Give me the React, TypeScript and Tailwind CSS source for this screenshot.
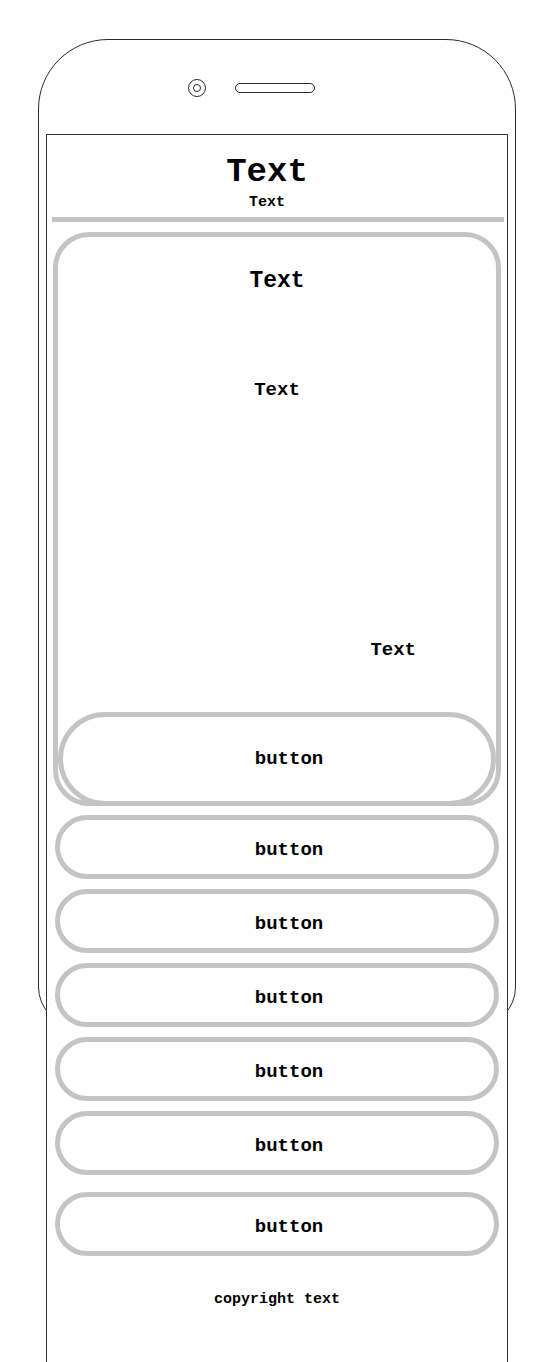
import React from 'react';

const mono = { fontFamily: '"Liberation Mono", "Courier New", monospace' };

function MenuButton({ label, className = '' }: { label: string; className?: string }) {
  return (
    <button
      className={`flex h-[64px] w-full items-center justify-center rounded-full border-[5px] border-[#c4c4c4] bg-white pl-[24px] pt-[5px] text-[19px] font-bold leading-[24px] text-black ${className}`}
    >
      {label}
    </button>
  );
}

export default function App() {
  const buttons = ['button', 'button', 'button', 'button', 'button'];

  return (
    <div className="relative flex h-[1362px] w-[552px] flex-col overflow-hidden bg-white pt-[134px]" style={mono}>
      {/* phone frame */}
      <div className="absolute left-[38px] top-[39px] h-[988px] w-[478px] rounded-t-[70px] rounded-b-[40px] border-[1.5px] border-[#2a2a2a]">
        <div className="flex items-center gap-[29px] pl-[149px] pt-[39px]">
          <div className="flex h-[18px] w-[18px] items-center justify-center rounded-full border-[1.5px] border-[#2a2a2a]">
            <div className="h-[8px] w-[8px] rounded-full border-[1.5px] border-[#2a2a2a]" />
          </div>
          <div className="h-[10px] w-[80px] rounded-full border-[1.5px] border-[#2a2a2a]" />
        </div>
      </div>

      {/* screen */}
      <div className="relative ml-[46px] flex h-[1280px] w-[462px] shrink-0 flex-col border border-[#333] bg-white px-[6px]">
        <header className="flex flex-col items-center pr-[20px] pt-[17px]">
          <h1 className="text-[34px] font-bold leading-[40px] text-black">Text</h1>
          <p className="mt-[2px] text-[15px] font-bold leading-[18px] text-black">Text</p>
        </header>
        <div className="-ml-[1px] -mr-[3px] mt-[5px] h-[5px] bg-[#c4c4c4]" />

        <section className="mt-[10px] flex h-[574px] flex-col rounded-[36px] border-[5px] border-[#c4c4c4]">
          <h2 className="pt-[30px] text-center text-[23px] font-bold leading-[28px] text-black">Text</h2>
          <p className="mt-[83px] text-center text-[19px] font-bold leading-[24px] text-black">Text</p>
          <p className="mr-[80px] mt-[236px] self-end text-[19px] font-bold leading-[24px] text-black">Text</p>
          <button className="-mb-[5px] mt-auto flex h-[94px] w-full items-center justify-center rounded-full border-[5px] border-[#c4c4c4] bg-white pl-[24px] text-[19px] font-bold leading-[24px] text-black">
            button
          </button>
        </section>

        <div className="mt-[9px] flex flex-col gap-[10px] px-[2px]">
          {buttons.map((b, i) => (
            <MenuButton key={i} label={b} />
          ))}
        </div>
        <div className="mt-[17px] px-[2px]">
          <MenuButton label="button" />
        </div>

        <p className="mt-[35px] text-center text-[15px] font-bold leading-[18px] text-black">copyright text</p>
      </div>
    </div>
  );
}
